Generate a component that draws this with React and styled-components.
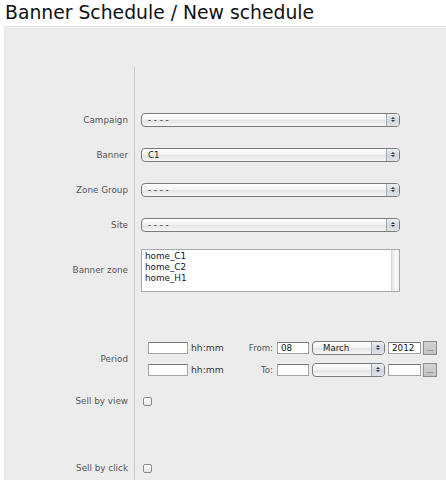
import React from 'react';
import styled, { createGlobalStyle } from 'styled-components';

const GlobalStyle = createGlobalStyle`
  html, body { margin: 0; padding: 0; background: #fff; }
  body { font-family: "DejaVu Sans", Verdana, sans-serif; }
`;

const Page = styled.div`
  width: 446px;
  height: 480px;
  overflow: hidden;
`;

const Title = styled.h1`
  margin: 2px 0 2px 5px;
  font-size: 18.8px;
  line-height: 22px;
  font-weight: normal;
  color: #111;
`;

const Panel = styled.div`
  margin-left: 4px;
  background: #ececec;
  border-top: 1px solid #e2e2e2;
  border-left: 1px solid #e4e4e4;
  padding-top: 40px;
  min-height: 460px;
`;

const Row = styled.div`
  display: grid;
  grid-template-columns: 130px 1fr;
  height: ${p => p.$h}px;
`;

const Label = styled.div`
  box-sizing: border-box;
  border-right: 1px solid #cacaca;
  display: flex;
  align-items: center;
  justify-content: flex-end;
  padding-right: 6px;
  font-size: 8.8px;
  color: #555;
`;

const Field = styled.div`
  display: flex;
  align-items: center;
  padding-left: ${p => p.$indent || 6}px;
`;

const Select = styled.div`
  box-sizing: border-box;
  width: ${p => p.$w}px;
  height: 14px;
  border: 1px solid #7a7a7a;
  border-radius: 4px;
  background: linear-gradient(#ffffff, #f3f3f3 45%, #e4e4e4 55%, #f8f8f8);
  display: flex;
  align-items: center;
  overflow: hidden;
`;

const SelectText = styled.span`
  flex: 1;
  padding-left: ${p => p.$pad || 6}px;
  font-size: 8.6px;
  line-height: 12px;
  color: #1c1c1c;
  white-space: pre;
`;

const Cap = styled.span`
  align-self: stretch;
  width: 12px;
  border-left: 1px solid #a8a8a8;
  background: linear-gradient(#eef1f5, #cfd6de 55%, #dfe4ea);
  display: flex;
  flex-direction: column;
  align-items: center;
  justify-content: center;
  gap: 1px;
`;

const Arrow = styled.span`
  width: 0;
  height: 0;
  border-left: 2px solid transparent;
  border-right: 2px solid transparent;
  ${p => (p.$down ? 'border-top: 2px solid #333;' : 'border-bottom: 2px solid #333;')}
`;

const ListBox = styled.div`
  box-sizing: border-box;
  width: 259px;
  height: 43px;
  border: 1px solid #a9a9a9;
  background: #fff;
  display: flex;
`;

const Items = styled.div`
  flex: 1;
  padding: 1px 3px;
  font-size: 8.8px;
  line-height: 11px;
  color: #111133;
`;

const Track = styled.div`
  width: 7px;
  border-left: 1px solid #d4d4d4;
  background: linear-gradient(to right, #e2e2e2, #fafafa 50%, #f0f0f0);
`;

const PeriodBlock = styled.div`
  display: flex;
  flex-direction: column;
  gap: 7px;
`;

const Line = styled.div`
  display: flex;
  align-items: center;
  height: 15px;
`;

const TextBox = styled.div`
  box-sizing: border-box;
  width: ${p => p.$w}px;
  height: 12px;
  border: 1px solid #a4a4a4;
  border-top-color: #777;
  background: #fff;
  font-size: 8.8px;
  line-height: 10px;
  padding-left: 3px;
  color: #111;
`;

const Unit = styled.span`
  width: 33px;
  margin-left: 3px;
  font-size: 9.2px;
  color: #333;
`;

const DateLabel = styled.span`
  width: 49px;
  margin-right: 4px;
  text-align: right;
  font-size: 8.6px;
  color: #555;
`;

const Gap = styled.span`
  width: ${p => p.$w}px;
`;

const DotsButton = styled.div`
  box-sizing: border-box;
  width: 14px;
  height: 14px;
  margin-left: 2px;
  border: 1px solid #8c8c8c;
  background: linear-gradient(#d2d2d2, #c2c2c2);
  display: flex;
  align-items: flex-end;
  justify-content: center;
  font-size: 7px;
  line-height: 9px;
  color: #444;
`;

const Check = styled.span`
  box-sizing: border-box;
  width: 9px;
  height: 9px;
  margin-left: 2px;
  border: 1px solid #8a8a8a;
  border-radius: 2px;
  background: linear-gradient(#ffffff, #e6e6e6);
`;

const Dropdown = ({ w = 259, value, pad }) => (
  <Select $w={w}>
    <SelectText $pad={pad}>{value}</SelectText>
    <Cap>
      <Arrow />
      <Arrow $down />
    </Cap>
  </Select>
);

const DateLine = ({ label, day, month, year }) => (
  <Line>
    <TextBox $w={40} />
    <Unit>hh:mm</Unit>
    <DateLabel>{label}</DateLabel>
    <TextBox $w={32}>{day}</TextBox>
    <Gap $w={3} />
    <Dropdown w={73} value={month} pad={10} />
    <Gap $w={3} />
    <TextBox $w={33}>{year}</TextBox>
    <DotsButton>...</DotsButton>
  </Line>
);

const selects = [
  ['Campaign', '- - - -'],
  ['Banner', 'C1'],
  ['Zone Group', '- - - -'],
  ['Site', '- - - -'],
];

export default function App() {
  return (
    <Page>
      <GlobalStyle />
      <Title>Banner Schedule / New schedule</Title>
      <Panel>
        <Row $h={35}>
          <Label />
          <Field />
        </Row>
        {selects.map(([name, value]) => (
          <Row $h={35} key={name}>
            <Label>{name}</Label>
            <Field>
              <Dropdown value={value} />
            </Field>
          </Row>
        ))}
        <Row $h={56}>
          <Label>Banner zone</Label>
          <Field>
            <ListBox>
              <Items>
                <div>home_C1</div>
                <div>home_C2</div>
                <div>home_H1</div>
              </Items>
              <Track />
            </ListBox>
          </Field>
        </Row>
        <Row $h={32}>
          <Label />
          <Field />
        </Row>
        <Row $h={57}>
          <Label>Period</Label>
          <Field $indent={13}>
            <PeriodBlock>
              <DateLine label="From:" day="08" month="March" year="2012" />
              <DateLine label="To:" day="" month="" year="" />
            </PeriodBlock>
          </Field>
        </Row>
        <Row $h={28}>
          <Label>Sell by view</Label>
          <Field>
            <Check />
          </Field>
        </Row>
        <Row $h={37}>
          <Label />
          <Field />
        </Row>
        <Row $h={32}>
          <Label>Sell by click</Label>
          <Field>
            <Check />
          </Field>
        </Row>
      </Panel>
    </Page>
  );
}
